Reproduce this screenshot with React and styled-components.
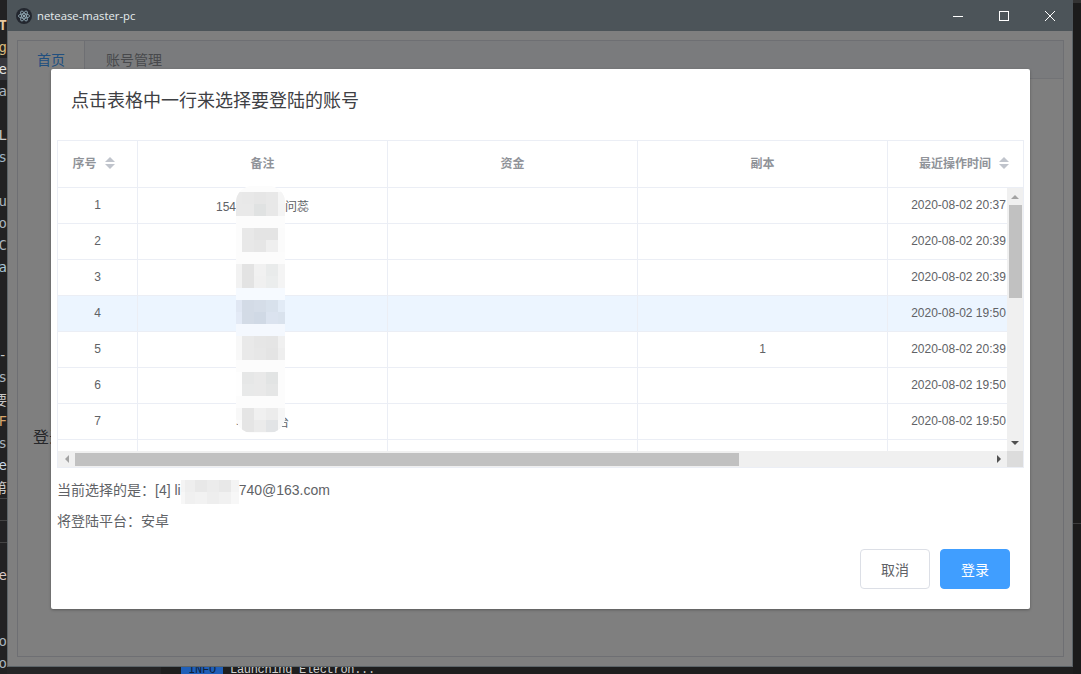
import React from "react";
import styled, { createGlobalStyle } from "styled-components";

const GlobalStyle = createGlobalStyle`
  html, body {
    margin: 0;
    padding: 0;
    background: #1e1e1e;
  }
  * {
    box-sizing: border-box;
  }
`;

const Desktop = styled.div`
  width: 1081px;
  height: 674px;
  overflow: hidden;
  display: grid;
  grid-template-columns: 7px 1066px 1fr;
  grid-template-rows: 667px 7px;
  background: #1e1e1e;
  font-family: "Liberation Sans", "Noto Sans CJK SC", sans-serif;
`;

const EditorStrip = styled.div`
  grid-row: 1 / 3;
  grid-column: 1;
  padding-top: 14px;
  background: #222223;
  overflow: hidden;
`;

const StripRow = styled.div`
  height: 22px;
  display: flex;
  justify-content: flex-end;
  align-items: center;
  overflow: hidden;
  white-space: nowrap;
  font-family: "DejaVu Sans Mono", "Noto Sans CJK SC", monospace;
  font-size: 14px;
  font-weight: ${props => (props.$bold ? 700 : 400)};
  color: ${props => props.$color || "#c8c8c8"};
  background: ${props => (props.$active ? "#37373d" : "transparent")};
  border-top: ${props => (props.$line ? "1px solid #444" : "none")};
`;

const RightStrip = styled.div`
  grid-row: 1 / 3;
  grid-column: 3;
  padding-top: 520px;
  border-top: 3px solid #333;
  background: #1b1b1b;
`;

const RightLine = styled.div`
  height: 1px;
  background: #3c3c3c;
`;

const Terminal = styled.div`
  grid-row: 2;
  grid-column: 2;
  height: 7px;
  display: flex;
  align-items: flex-start;
  gap: 7px;
  overflow: hidden;
  font-family: "Liberation Mono", monospace;
  font-size: 12px;
  letter-spacing: -0.3px;
  line-height: 14px;
  color: #cfcfcf;
`;

const TerminalSide = styled.div`
  width: 154px;
  height: 7px;
  margin-right: 20px;
  background: #252526;
`;

const InfoBadge = styled.span`
  width: 42px;
  height: 14px;
  margin-left: -7px;
  margin-top: -4px;
  text-align: center;
  background: #1f5fb8;
  color: #10223c;
`;

const TerminalText = styled.span`
  margin-top: -4px;
  white-space: nowrap;
`;

const Window = styled.div`
  grid-row: 1;
  grid-column: 2;
  display: flex;
  flex-direction: column;
  border: 1px solid #5c6468;
  border-top: none;
`;

const TitleBar = styled.div`
  height: 31px;
  margin: 0 -1px;
  display: flex;
  align-items: center;
  padding-left: 9px;
  background: #4c5459;
  color: #e6ecee;
  font-family: "Open Sans", sans-serif;
  font-size: 11.3px;
`;

const AppIcon = styled.svg`
  width: 16px;
  height: 16px;
  margin-right: 5px;
`;

const WindowControls = styled.div`
  margin-left: auto;
  display: flex;
`;

const WindowButton = styled.div`
  width: 46px;
  height: 31px;
  display: flex;
  align-items: center;
  justify-content: center;
`;

const WindowBody = styled.div`
  position: relative;
  flex: 1;
  display: flex;
  padding: 9px 8px 9px 9px;
  background: #fff;
`;

const Overlay = styled.div`
  position: absolute;
  inset: 0;
  background: rgba(0, 0, 0, 0.5);
`;

const TabCard = styled.div`
  flex: 1;
  border: 1px solid #dcdfe6;
  display: flex;
  flex-direction: column;
`;

const TabHead = styled.div`
  height: 38px;
  display: flex;
  background: #f5f7fa;
  border-bottom: 1px solid #e4e7ed;
`;

const Tab = styled.div`
  height: ${props => (props.$active ? "38px" : "37px")};
  padding: 0 ${props => (props.$active ? "19px" : "21px")} 2px;
  display: flex;
  align-items: center;
  font-size: 14px;
  color: ${props => (props.$active ? "#409eff" : "#909399")};
  background: ${props => (props.$active ? "#fff" : "transparent")};
  border-right: ${props => (props.$active ? "1px solid #dcdfe6" : "none")};
`;

const TabContent = styled.div`
  padding: 345px 15px 0;
  font-size: 16px;
  color: #4a4c52;
`;

const Dialog = styled.div`
  position: absolute;
  top: 38px;
  left: 43px;
  width: 979px;
  height: 540px;
  display: flex;
  flex-direction: column;
  background: #fff;
  border-radius: 2px;
  box-shadow: 0 1px 3px rgba(0, 0, 0, 0.3);
`;

const DialogHeader = styled.div`
  height: 71px;
  flex-shrink: 0;
  padding: 20px 20px 0;
  font-size: 18px;
  line-height: 24px;
  color: #3e4044;
`;

const DialogBody = styled.div`
  padding: 0 6px;
`;

const Table = styled.div`
  position: relative;
  width: 967px;
  height: 328px;
  border: 1px solid #ebeef5;
  overflow: hidden;
  font-size: 12px;
  color: #606266;
`;

const HeadRow = styled.div`
  height: 47px;
  display: grid;
  grid-template-columns: 80px 250px 250px 250px 160px;
  border-bottom: 1px solid #ebeef5;
  color: #909399;
  font-weight: 700;
`;

const BodyArea = styled.div`
  height: 263px;
  display: flex;
`;

const Rows = styled.div`
  width: 949px;
  overflow: hidden;
`;

const Row = styled.div`
  height: 36px;
  display: grid;
  grid-template-columns: 80px 250px 250px 250px 141px;
  border-bottom: 1px solid #ebeef5;
  background: ${props => (props.$selected ? "#ecf5ff" : "#fff")};
`;

const Cell = styled.div`
  display: flex;
  align-items: center;
  justify-content: center;
  padding-bottom: 1px;
  white-space: nowrap;
  border-right: ${props => (props.$last ? "none" : "1px solid #ebeef5")};
`;

const HeadCell = styled(Cell)`
  padding-bottom: 3px;
`;

const SortCaret = styled.span`
  width: 26px;
  height: 12px;
  display: flex;
  flex-direction: column;
  align-items: center;
  justify-content: space-between;
  flex-shrink: 0;
`;

const Triangle = styled.i`
  display: block;
  width: 0;
  height: 0;
  border-left: ${props => props.$size}px solid transparent;
  border-right: ${props => props.$size}px solid transparent;
  ${props =>
    props.$down
      ? `border-top: ${props.$size}px solid ${props.$color};`
      : `border-bottom: ${props.$size}px solid ${props.$color};`}
`;

const SideTriangle = styled.i`
  display: block;
  width: 0;
  height: 0;
  border-top: 4px solid transparent;
  border-bottom: 4px solid transparent;
  ${props =>
    props.$right
      ? `border-left: 4px solid ${props.$color};`
      : `border-right: 4px solid ${props.$color};`}
`;

const VScroll = styled.div`
  width: 16px;
  display: flex;
  flex-direction: column;
  background: #f0f0f0;
`;

const VThumb = styled.div`
  width: 13px;
  height: 93px;
  margin-left: 2px;
  background: #c1c1c1;
`;

const VArrow = styled.div`
  height: 17px;
  display: flex;
  align-items: center;
  justify-content: center;
  margin-top: ${props => (props.$end ? "auto" : "0")};
`;

const HScroll = styled.div`
  height: 16px;
  display: flex;
  background: #f0f0f0;
`;

const HArrow = styled.div`
  width: 17px;
  display: flex;
  align-items: center;
  justify-content: center;
  margin-left: ${props => (props.$end ? "auto" : "0")};
`;

const HThumb = styled.div`
  width: 664px;
  height: 13px;
  margin-top: 2px;
  background: #c1c1c1;
`;

const ScrollCorner = styled.div`
  width: 16px;
  background: #dcdcdc;
`;

const NameGap = styled.span`
  display: inline-block;
  width: ${props => props.$width}px;
`;

const RowMosaic = styled.svg`
  position: absolute;
  left: 178px;
  top: 45px;
  width: 49px;
  height: 247px;
  border-radius: 16px;
`;

const Info = styled.div`
  padding-top: 12px;
  display: flex;
  flex-direction: column;
  gap: 10px;
  font-size: 14px;
  line-height: 21px;
  color: #606266;
`;

const InfoRow = styled.div`
  height: 21px;
  display: flex;
  align-items: flex-start;
  white-space: pre;
`;

const EmailMosaic = styled.svg`
  position: relative;
  width: 58px;
  height: 24px;
  flex-shrink: 0;
`;

const DialogFooter = styled.div`
  margin-top: auto;
  padding: 0 20px 20px;
  display: flex;
  justify-content: flex-end;
  gap: 10px;
`;

const Button = styled.button`
  width: 70px;
  height: 40px;
  padding: 0;
  font-family: inherit;
  font-size: 14px;
  border-radius: 4px;
  border: 1px solid ${props => (props.$primary ? "#409eff" : "#dcdfe6")};
  background: ${props => (props.$primary ? "#409eff" : "#fff")};
  color: ${props => (props.$primary ? "#fff" : "#606266")};
`;

const stripLines = {
  0: { text: "T", color: "#e8c9a0", bold: true },
  1: { text: "g", color: "#d7ba7d" },
  2: { text: "e", color: "#e4e4e4", active: true },
  3: { text: "a", color: "#a9b4bf" },
  5: { text: "L", color: "#c8c8c8" },
  6: { text: "s", color: "#9fb4c4" },
  8: { text: "u", color: "#a9b4bf" },
  9: { text: "o", color: "#a9b4bf" },
  10: { text: "C", color: "#a9b4bf" },
  11: { text: "a", color: "#a9c4d4" },
  15: { text: "-", color: "#c8c8c8" },
  16: { text: "s", color: "#a9b4bf" },
  17: { text: "要", color: "#c8c8c8" },
  18: { text: "F", color: "#d7a56b" },
  19: { text: "s", color: "#a9b4bf" },
  20: { text: "e", color: "#c8d8e8" },
  21: { text: "第", color: "#c8c8c8" },
  22: { line: true },
  23: { line: true },
  24: { line: true },
  25: { text: "e", color: "#d8c8c8" },
  28: { text: "o", color: "#a9b4bf" },
  29: { text: "o", color: "#a9b4bf" },
};

const tableRows = [
  { id: 1, time: "2020-08-02 20:37", note: <>154注<NameGap $width={37} />问蕊</> },
  { id: 2, time: "2020-08-02 20:39" },
  { id: 3, time: "2020-08-02 20:39" },
  { id: 4, time: "2020-08-02 19:50", selected: true },
  { id: 5, time: "2020-08-02 20:39", copies: "1" },
  { id: 6, time: "2020-08-02 19:50" },
  { id: 7, time: "2020-08-02 19:50", note: <>.<NameGap $width={38} />台</> },
  { id: "", time: "" },
];

// 马赛克色块,每行对应 12px 高的一条
const mosaicX = [0, 6, 18, 30, 42, 49];
const band = ["#fcfcfc", "#fcfcfc", "#fcfcfc", "#fcfcfc", "#fcfcfc"];
const mosaicBands = [
  ["#e9e9e9", "#e8e8e8", "#e6e6e6", "#e8e8e8", "#f5f5f5"],
  ["#e9e9e9", "#e9e9e9", "#e0e2e2", "#e8e8e8", "#f4f4f4"],
  band,
  ["#fcfcfc", "#e8e8e8", "#e4e4e4", "#e4e4e4", "#fbfbfb"],
  ["#fcfcfc", "#e8e8e8", "#e6e6e6", "#efefef", "#fbfbfb"],
  band,
  ["#f2f2f2", "#e3e3e3", "#f1f1f1", "#e9ebeb", "#f4f4f4"],
  ["#f2f2f2", "#e3e3e3", "#f0f0f0", "#ebeded", "#f4f4f4"],
  ["#f6faff", "#f6faff", "#f6faff", "#f6faff", "#f6faff"],
  ["#e0e7f3", "#d3dbe6", "#d5dde8", "#d8e1ec", "#e2ebf6"],
  ["#e3eaf6", "#d3dbe6", "#d0d9e5", "#dbe3ef", "#d9e2ed"],
  ["#f4f8fe", "#f4f8fe", "#f4f8fe", "#f4f8fe", "#f4f8fe"],
  ["#f8f8f8", "#e9e9e9", "#e6e6e6", "#e5e5e5", "#f0f0f0"],
  ["#f8f8f8", "#e9e9e9", "#e7e7e7", "#e4e4e4", "#eeeeee"],
  band,
  ["#fefefe", "#e6e7e7", "#e9e9e9", "#e2e4e4", "#fcfcfc"],
  ["#fefefe", "#e8e9e9", "#e9e9e9", "#e5e6e6", "#fcfcfc"],
  band,
  ["#f8f8f8", "#e5e5e5", "#f0f0f0", "#ececec", "#f6f6f6"],
  ["#fbfbfb", "#e5e5e5", "#ebebeb", "#e2e4e6", "#f8f8f8"],
];

const emailX = [0, 4, 14, 26, 38, 50, 58];
const emailBands = [
  ["#f4f4f4", "#eeeeee", "#e8e8e8", "#ececec", "#e8e8e8", "#f4f4f4"],
  ["#f7f7f7", "#f0f0f0", "#f2f2f2", "#eeeeee", "#f1f1f1", "#f7f7f7"],
];

function MosaicCells({ bands, xs, rowHeight, offset = 0 }) {
  return bands.map((colors, rowIndex) =>
    colors.map((color, colIndex) => (
      <rect
        key={`${rowIndex}_${colIndex}`}
        x={xs[colIndex]}
        y={offset + rowIndex * rowHeight}
        width={xs[colIndex + 1] - xs[colIndex]}
        height={rowHeight}
        fill={color}
      />
    ))
  );
}

function Sorter() {
  return (
    <SortCaret>
      <Triangle $size={5} $color="#c0c4cc" />
      <Triangle $size={5} $color="#c0c4cc" $down />
    </SortCaret>
  );
}

function ElectronIcon() {
  return (
    <AppIcon viewBox="0 0 16 16">
      <circle cx="8" cy="8" r="8" fill="#23272f" />
      <g fill="none" stroke="#a8c4d0" strokeWidth="0.7">
        <ellipse cx="8" cy="8" rx="5.6" ry="2.2" />
        <ellipse cx="8" cy="8" rx="5.6" ry="2.2" transform="rotate(60 8 8)" />
        <ellipse cx="8" cy="8" rx="5.6" ry="2.2" transform="rotate(120 8 8)" />
      </g>
      <circle cx="8" cy="8" r="0.9" fill="#c4dde6" />
    </AppIcon>
  );
}

export default function App() {
  return (
    <>
      <GlobalStyle />
      <Desktop>
        <EditorStrip>
          {Array.from({ length: 30 }, (_, index) => {
            const line = stripLines[index] || {};
            return (
              <StripRow
                key={index}
                $color={line.color}
                $bold={line.bold}
                $active={line.active}
                $line={line.line}
              >
                {line.text}
              </StripRow>
            );
          })}
        </EditorStrip>

        <Window>
          <TitleBar>
            <ElectronIcon />
            netease-master-pc
            <WindowControls>
              <WindowButton>
                <svg width="10" height="10" viewBox="0 0 10 10">
                  <path d="M0 5.5H10" stroke="#fff" strokeWidth="1" />
                </svg>
              </WindowButton>
              <WindowButton>
                <svg width="10" height="10" viewBox="0 0 10 10">
                  <rect x="0.5" y="0.5" width="9" height="9" fill="none" stroke="#fff" />
                </svg>
              </WindowButton>
              <WindowButton>
                <svg width="10" height="10" viewBox="0 0 10 10">
                  <path d="M0 0L10 10M10 0L0 10" stroke="#fff" strokeWidth="1" />
                </svg>
              </WindowButton>
            </WindowControls>
          </TitleBar>

          <WindowBody>
            <TabCard>
              <TabHead>
                <Tab $active>首页</Tab>
                <Tab>账号管理</Tab>
              </TabHead>
              <TabContent>登录</TabContent>
            </TabCard>

            <Overlay />

            <Dialog>
              <DialogHeader>点击表格中一行来选择要登陆的账号</DialogHeader>
              <DialogBody>
                <Table>
                  <HeadRow>
                    <HeadCell>
                      序号
                      <Sorter />
                    </HeadCell>
                    <HeadCell>备注</HeadCell>
                    <HeadCell>资金</HeadCell>
                    <HeadCell>副本</HeadCell>
                    <HeadCell $last>
                      最近操作时间
                      <Sorter />
                    </HeadCell>
                  </HeadRow>
                  <BodyArea>
                    <Rows>
                      {tableRows.map((row, index) => (
                        <Row key={index} $selected={row.selected}>
                          <Cell>{row.id}</Cell>
                          <Cell>{row.note}</Cell>
                          <Cell />
                          <Cell>{row.copies}</Cell>
                          <Cell $last>{row.time}</Cell>
                        </Row>
                      ))}
                    </Rows>
                    <VScroll>
                      <VArrow>
                        <Triangle $size={4} $color="#a3a3a3" />
                      </VArrow>
                      <VThumb />
                      <VArrow $end>
                        <Triangle $size={4} $color="#505050" $down />
                      </VArrow>
                    </VScroll>
                  </BodyArea>
                  <HScroll>
                    <HArrow>
                      <SideTriangle $color="#a3a3a3" />
                    </HArrow>
                    <HThumb />
                    <HArrow $end>
                      <SideTriangle $color="#505050" $right />
                    </HArrow>
                    <ScrollCorner />
                  </HScroll>
                  <RowMosaic viewBox="0 0 49 247" shapeRendering="crispEdges">
                    <rect width="49" height="247" fill="#fcfcfc" />
                    <MosaicCells bands={mosaicBands} xs={mosaicX} rowHeight={12} offset={6} />
                  </RowMosaic>
                </Table>
                <Info>
                  <InfoRow>
                    {"当前选择的是\uFF1A[4] li"}
                    <EmailMosaic viewBox="0 0 58 24" shapeRendering="crispEdges">
                      <MosaicCells bands={emailBands} xs={emailX} rowHeight={12} />
                    </EmailMosaic>
                    740@163.com
                  </InfoRow>
                  <InfoRow>{"将登陆平台\uFF1A安卓"}</InfoRow>
                </Info>
              </DialogBody>
              <DialogFooter>
                <Button>取消</Button>
                <Button $primary>登录</Button>
              </DialogFooter>
            </Dialog>
          </WindowBody>
        </Window>

        <RightStrip>
          <RightLine />
        </RightStrip>

        <Terminal>
          <TerminalSide />
          <InfoBadge>INFO</InfoBadge>
          <TerminalText>Launching Electron...</TerminalText>
        </Terminal>
      </Desktop>
    </>
  );
}
